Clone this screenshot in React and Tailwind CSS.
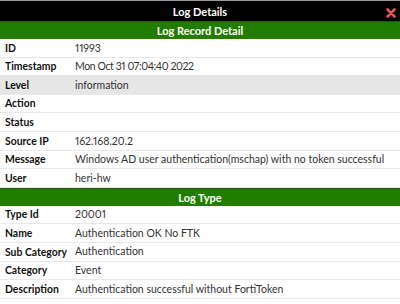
import React from 'react';

const record = [
  ['ID', '11993'],
  ['Timestamp', 'Mon Oct 31 07:04:40 2022', false, 'tracking-[-0.4px]'],
  ['Level', 'information', true],
  ['Action', ''],
  ['Status', ''],
  ['Source IP', '162.168.20.2'],
  ['Message', 'Windows AD user authentication(mschap) with no token successful'],
  ['User', 'heri-hw'],
];

const logType = [
  ['Type Id', '20001'],
  ['Name', 'Authentication OK No FTK'],
  ['Sub Category', 'Authentication'],
  ['Category', 'Event'],
  ['Description', 'Authentication successful without FortiToken'],
];

function Section({ title }) {
  return (
    <div className="h-[18px] bg-[#217c00] border-t border-[#1a6000] flex items-center justify-center text-white font-bold text-[11px]">
      {title}
    </div>
  );
}

function Row({ label, value, hl, cls = '' }) {
  return (
    <div className={`h-[18.6px] flex items-center border-b border-[#e8e8e8] ${hl ? 'bg-[#e6e6e6]' : 'bg-white'}`}>
      <div className="w-[75px] pl-[5px] font-bold text-[10.4px] text-[#111] shrink-0 whitespace-nowrap">{label}</div>
      <div className={`text-[10.5px] text-[#333] whitespace-nowrap proportional-nums ${cls}`}>{value}</div>
    </div>
  );
}

export default function App() {
  return (
    <div className="w-[400px] h-[304px] overflow-hidden bg-white leading-none" style={{ fontFamily: 'Lato, "Liberation Sans", sans-serif' }}>
      <div className="h-px bg-[#9a9a9a]" />
      <div className="h-[20px] bg-black relative flex items-center justify-center text-white font-bold text-[11px]">
        Log Details
        <svg className="absolute right-[4px] top-[7px]" width="10" height="10" viewBox="0 0 10 10">
          <path d="M1.5 1.5 L8.5 8.5 M8.5 1.5 L1.5 8.5" stroke="#e05a5a" strokeWidth="2.6" strokeLinecap="round" />
        </svg>
      </div>
      <Section title="Log Record Detail" />
      {record.map(([l, v, hl, cls]) => (
        <Row key={l} label={l} value={v} hl={hl} cls={cls} />
      ))}
      <Section title="Log Type" />
      {logType.map(([l, v]) => (
        <Row key={l} label={l} value={v} />
      ))}
    </div>
  );
}
